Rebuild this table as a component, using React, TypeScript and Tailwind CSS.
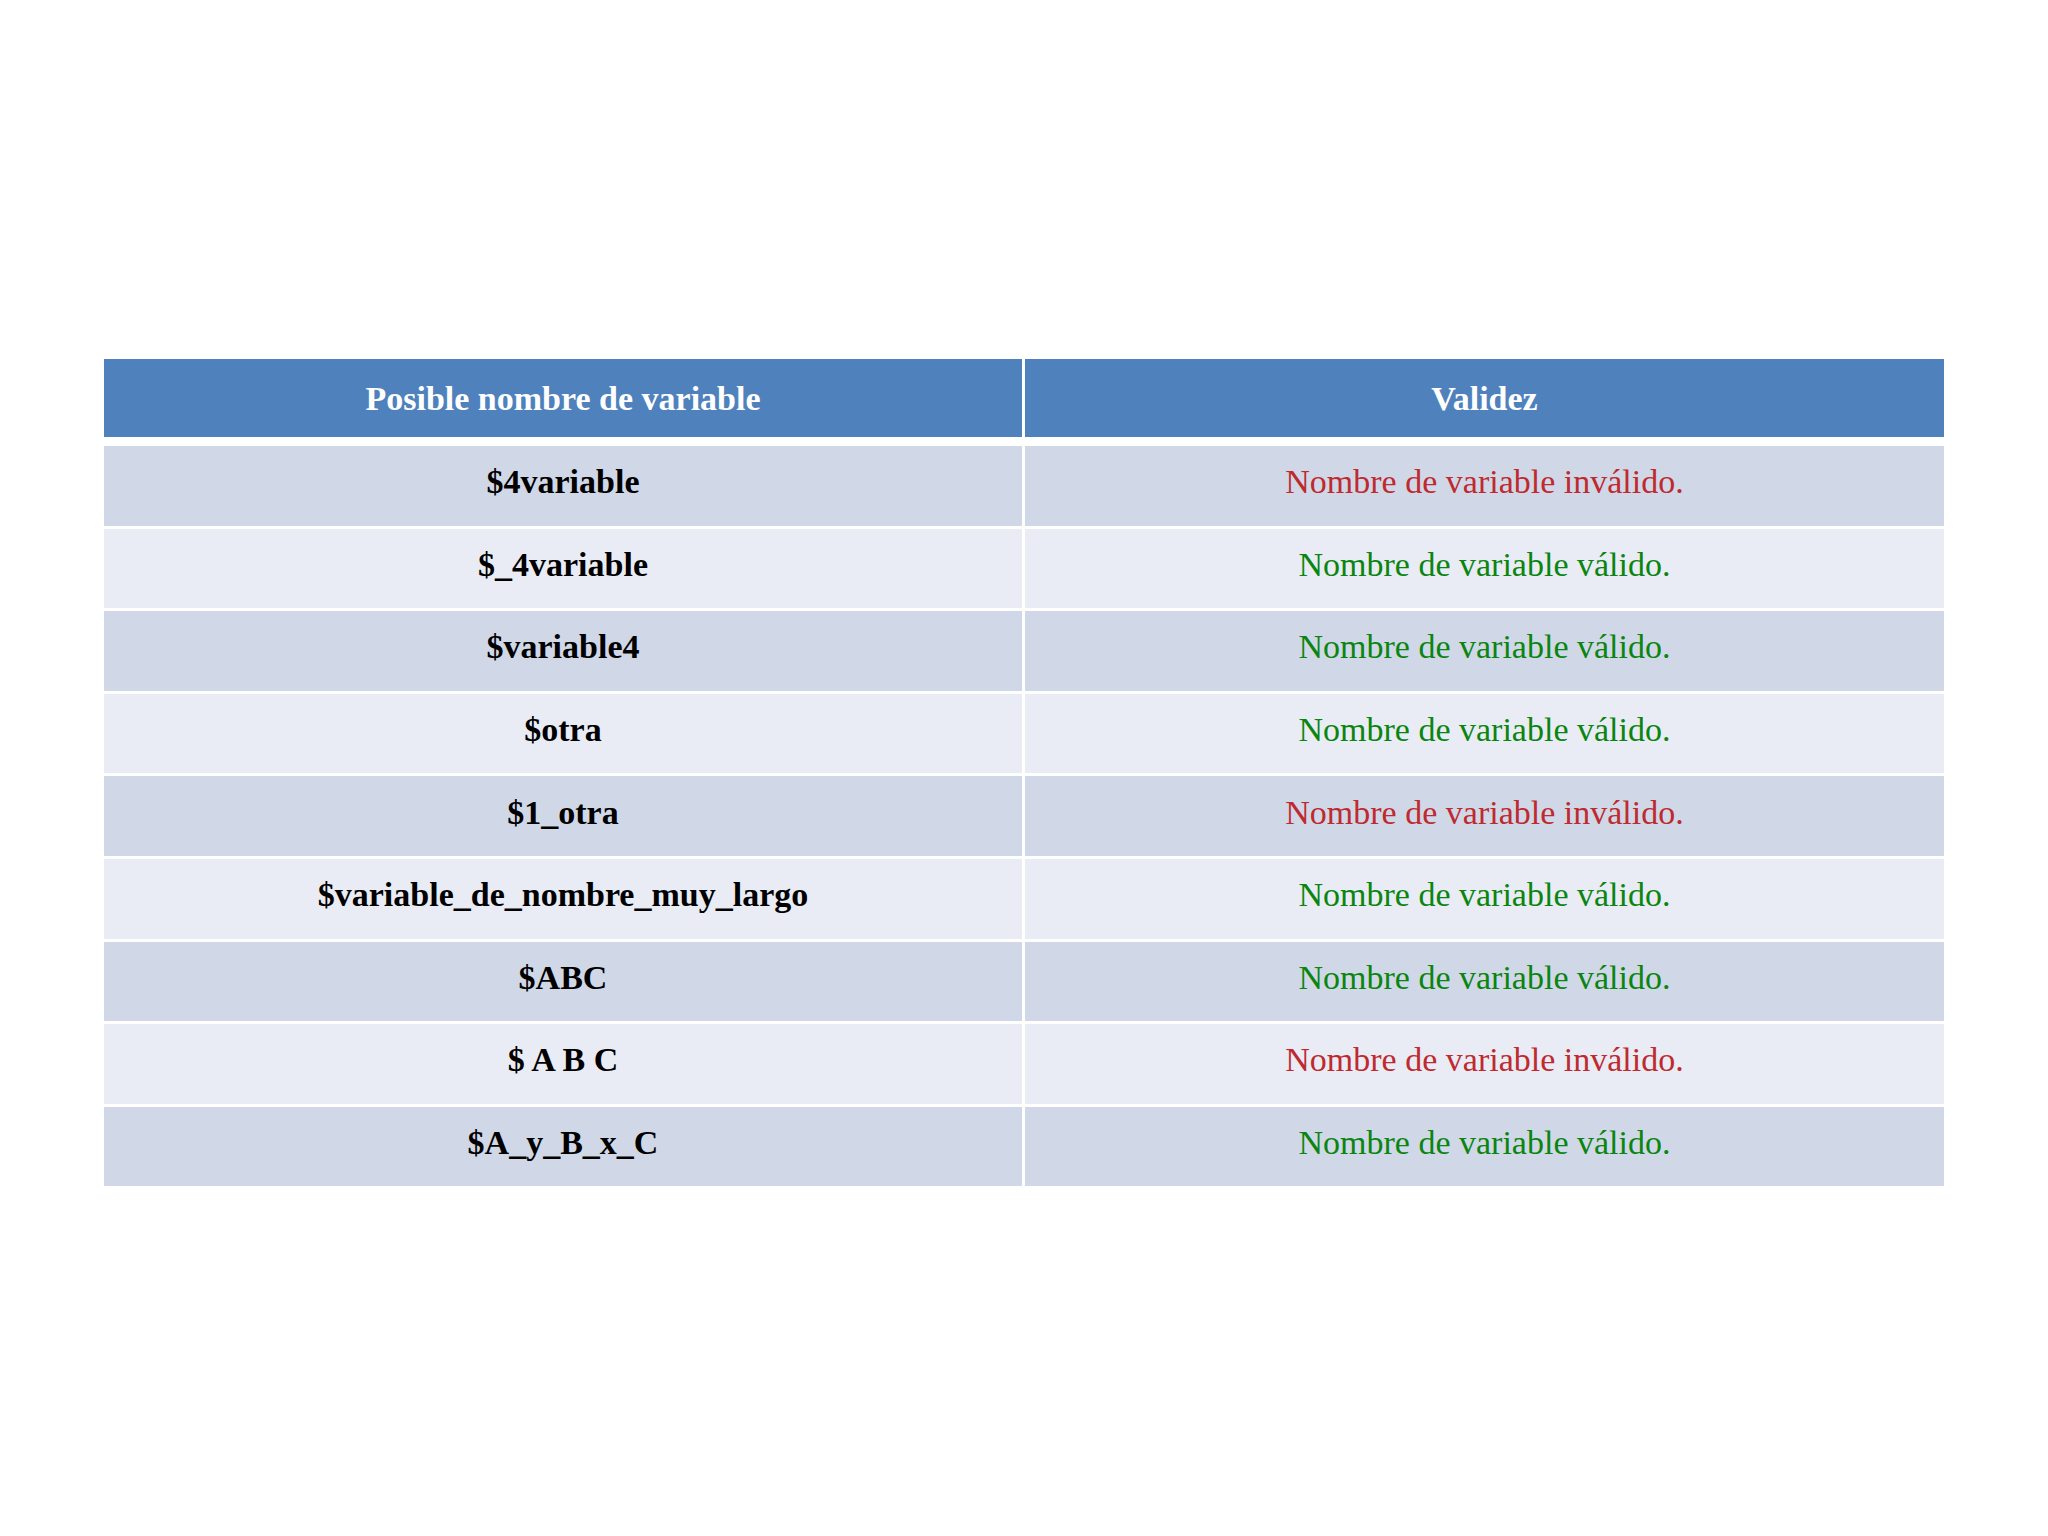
const rows: { name: string; ok: boolean }[] = [
  { name: "$4variable", ok: false },
  { name: "$_4variable", ok: true },
  { name: "$variable4", ok: true },
  { name: "$otra", ok: true },
  { name: "$1_otra", ok: false },
  { name: "$variable_de_nombre_muy_largo", ok: true },
  { name: "$ABC", ok: true },
  { name: "$ A B C", ok: false },
  { name: "$A_y_B_x_C", ok: true },
];

export default function App() {
  return (
    <div
      className="w-[2048px] h-[1536px] bg-white pt-[359px] px-[104px]"
      style={{ fontFamily: '"Liberation Serif", "Times New Roman", serif' }}
    >
      <div className="flex flex-col w-[1840px]">
        <div className="grid grid-cols-[918px_1fr] gap-x-[3px] h-[78px] text-[34px] font-bold text-white">
          <div className="bg-[#4f81bd] flex items-center justify-center">
            Posible nombre de variable
          </div>
          <div className="bg-[#4f81bd] flex items-center justify-center">
            Validez
          </div>
        </div>
        <div className="flex flex-col gap-y-[3px] mt-[9px]">
          {rows.map((r, i) => (
            <div
              key={i}
              className="grid grid-cols-[918px_1fr] gap-x-[3px] h-[79.6px] text-[34px]"
            >
              <div
                className={`${
                  i % 2 === 0 ? "bg-[#d0d8e8]" : "bg-[#e9ecf4]"
                } flex items-center justify-center pb-[8px] font-bold text-black whitespace-pre`}
              >
                {r.name}
              </div>
              <div
                className={`${
                  i % 2 === 0 ? "bg-[#d0d8e8]" : "bg-[#e9ecf4]"
                } flex items-center justify-center pb-[8px] ${
                  r.ok ? "text-[#0a850f]" : "text-[#be2a2e]"
                }`}
              >
                {r.ok
                  ? "Nombre de variable válido."
                  : "Nombre de variable inválido."}
              </div>
            </div>
          ))}
        </div>
      </div>
    </div>
  );
}
